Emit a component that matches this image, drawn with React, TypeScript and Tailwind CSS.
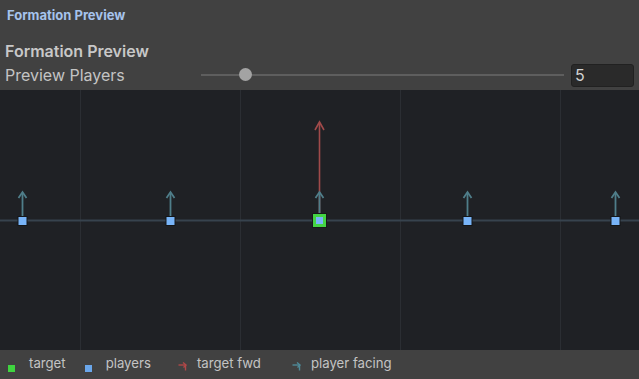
import React from "react";

const players = [22, 170, 467, 615];

function Canvas() {
  return (
    <svg width="639" height="260" viewBox="0 90 639 260" className="block">
      <rect x="0" y="90" width="639" height="260" fill="#1f2125" />
      {[80, 240, 400, 560].map((x) => (
        <line key={x} x1={x + 0.5} y1="90" x2={x + 0.5} y2="350" stroke="#2b2e33" strokeWidth="1" />
      ))}
      <line x1="0" y1="220.5" x2="639" y2="220.5" stroke="#37434e" strokeWidth="2" />
      {/* target forward arrow */}
      <line x1="319.5" y1="214" x2="319.5" y2="123" stroke="#a04a4a" strokeWidth="1.6" />
      <polyline points="315,130 319.5,122 324,130" fill="none" stroke="#a04a4a" strokeWidth="1.6" />
      {[...players, 319].map((x) => (
        <g key={x}>
          <line x1={x + 0.5} y1="216" x2={x + 0.5} y2="193" stroke="#4f7e8a" strokeWidth="1.8" />
          <polyline points={`${x - 3.5},198 ${x + 0.5},192 ${x + 4.5},198`} fill="none" stroke="#4f7e8a" strokeWidth="1.8" />
        </g>
      ))}
      <rect x="312.5" y="213.5" width="14" height="14" fill="#44d444" stroke="#17191b" strokeWidth="1" />
      <rect x="316" y="217" width="7" height="7" fill="#78b4f8" />
      {players.map((x) => (
        <rect key={"p" + x} x={x - 4} y="216.5" width="9" height="9" fill="#78b4f8" stroke="#141618" strokeWidth="1" />
      ))}
    </svg>
  );
}

function LegendArrow({ color }: { color: string }) {
  return (
    <svg width="10" height="9" viewBox="0 0 10 9" className="block">
      <line x1="0.5" y1="3" x2="8" y2="3" stroke={color} strokeWidth="1.4" />
      <polyline points="5,0.5 8,3 5.5,5.5" fill="none" stroke={color} strokeWidth="1.4" />
      <line x1="7.5" y1="3" x2="7.5" y2="8.5" stroke={color} strokeWidth="1.4" />
    </svg>
  );
}

export default function App() {
  return (
    <div
      className="w-[639px] h-[379px] bg-[#414141] flex flex-col overflow-hidden"
      style={{ fontFamily: "Inter, 'Noto Sans', sans-serif" }}
    >
      <div className="h-[90px] flex flex-col">
        <div className="h-[30px] px-[7px] pt-[6px] text-[13px] font-bold text-[#a6c3ec] leading-[18px]">
          Formation Preview
        </div>
        <div className="px-[5px] pt-[10px] text-[16px] font-semibold text-[#c8c8c8] leading-[22px]">
          Formation Preview
        </div>
        <div className="flex items-center h-[26px] pl-[5px] pr-[5px]">
          <div className="w-[196px] text-[16px] text-[#c4c4c4] leading-[20px]">Preview Players</div>
          <div className="relative flex-1 h-[14px] flex items-center mr-[7px]">
            <div className="w-full h-[2px] bg-[#5e5e5e]" />
            <div className="absolute left-[38px] top-[0px] w-[13px] h-[13px] rounded-full bg-[#a3a3a3]" />
          </div>
          <div className="w-[63px] h-[23px] rounded-[3px] bg-[#2a2a2a] border border-[#212121] text-[16px] text-[#d2d2d2] pl-[3px] leading-[21px]">
            5
          </div>
        </div>
      </div>
      <Canvas />
      <div className="flex-1 flex items-center pl-[8px] text-[13.2px] text-[#c4c4c4] leading-[16px]">
        <div className="w-[7px] h-[7px] bg-[#3fd43f] mt-[8px]" />
        <span className="ml-[14px] mt-[-4px]">target</span>
        <div className="w-[7px] h-[7px] bg-[#6aa6ea] ml-[19px] mt-[8px]" />
        <span className="ml-[14px] mt-[-4px]">players</span>
        <div className="ml-[27px] mt-[4px]"><LegendArrow color="#b04848" /></div>
        <span className="ml-[9px] mt-[-4px]">target fwd</span>
        <div className="ml-[31px] mt-[4px]"><LegendArrow color="#4f8a98" /></div>
        <span className="ml-[9px] mt-[-4px]">player facing</span>
      </div>
    </div>
  );
}
